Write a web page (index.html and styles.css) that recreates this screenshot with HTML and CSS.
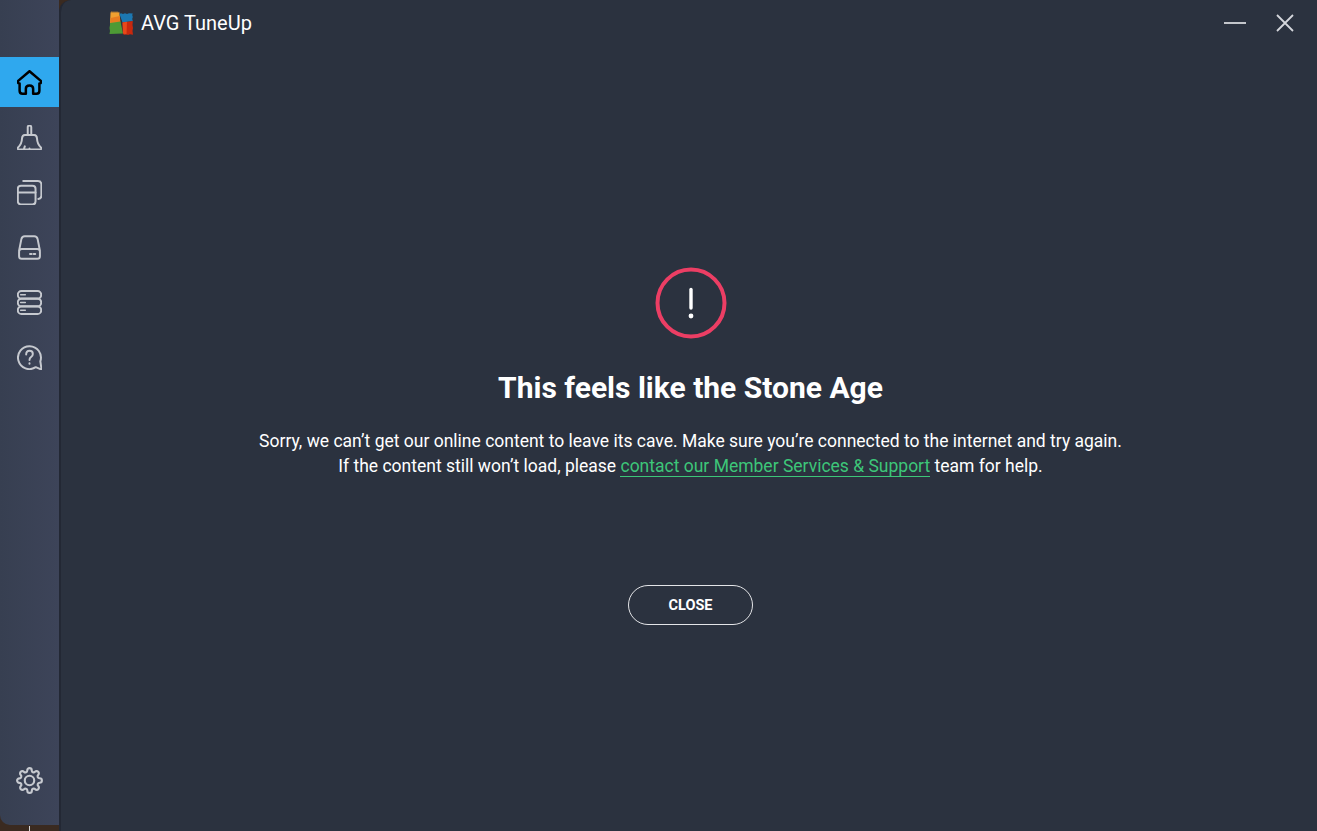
FILE: index.html
```html
<!DOCTYPE html>
<html lang="en">
<head>
  <meta charset="UTF-8" />
  <title>AVG TuneUp</title>
  <link rel="stylesheet" href="styles.css">
</head>
<body>
  <div class="app">
    <nav class="sidebar">
      <a class="nav-item active">
        <svg class="icon" viewBox="0 0 24 24"><path d="M12 1.2 L22.6 10.2 Q23.6 11.2 23 12.3 Q22.6 13 21.5 13 L21.5 20 Q21.5 22.8 18.7 22.8 L15.5 22.8 L15.5 18 Q15.5 14.8 12 14.8 Q8.5 14.8 8.5 18 L8.5 22.8 L5.3 22.8 Q2.5 22.8 2.5 20 L2.5 13 Q1.4 13 1 12.3 Q0.4 11.2 1.4 10.2 Z"/></svg>
      </a>
      <a class="nav-item">
        <svg class="icon" viewBox="0 0 24 24"><path d="M10.3 9.5 L10.3 2.2 Q10.3 0.5 12 0.5 Q13.7 0.5 13.7 2.2 L13.7 9.5 M4.8 13 Q5 9.5 7.5 9.5 L16.5 9.5 Q19 9.5 19.2 13 Q19.4 18.5 23.2 21.8 Q23.9 23.4 22 23.4 L2 23.4 Q0.1 23.4 0.8 21.8 Q4.6 18.5 4.8 13 Z M6.5 23.4 L7.5 20.5 M12 23.8 L12 22.5"/></svg>
      </a>
      <a class="nav-item">
        <svg class="icon" viewBox="0 0 24 24"><rect x="0.8" y="5.5" width="17" height="18" rx="3"/><path d="M0.8 12 L17.8 12 M6 1 L20 1 Q23.4 1 23.4 4.4 L23.4 15 Q23.4 17.8 20.5 18.2"/></svg>
      </a>
      <a class="nav-item">
        <svg class="icon" viewBox="0 0 24 24"><path d="M2 15 L4.2 4 Q4.8 1.2 7.4 1.2 L16.6 1.2 Q19.2 1.2 19.8 4 L22 15 M4.5 13.4 L19.5 13.4 Q22 13.4 22 15.9 L22 20.3 Q22 22.8 19.5 22.8 L4.5 22.8 Q2 22.8 2 20.3 L2 15.9 Q2 13.4 4.5 13.4 Z M12.5 18.2 L14 18.2 M16 18.2 L17.5 18.2"/></svg>
      </a>
      <a class="nav-item">
        <svg class="icon" viewBox="0 0 24 24"><rect x="0.8" y="1" width="22.4" height="7.2" rx="3.4"/><rect x="0.8" y="8.4" width="22.4" height="7.2" rx="3.4"/><rect x="0.8" y="15.8" width="22.4" height="7.2" rx="3.4"/><path class="thin" d="M3.5 4.6 L8 4.6 M3.5 12 L8 12 M3.5 19.4 L8 19.4"/></svg>
      </a>
      <a class="nav-item">
        <svg class="icon" viewBox="0 0 24 24"><path d="M23.6 23.6 L18 21.3 A11 11 0 1 1 22.4 15.6 Z M8.8 9.2 Q8.8 5.6 12 5.6 Q15.2 5.6 15.2 8.6 Q15.2 10.6 13.4 11.6 Q12 12.4 12 14.4"/><path d="M12 17.4 L12 18"/></svg>
      </a>
      <a class="nav-item settings">
        <svg class="icon gear" viewBox="0 0 24 24"><circle cx="12" cy="12" r="4.2"/><path d="M19.4 15a1.65 1.65 0 0 0 .33 1.82l.06.06a2 2 0 0 1 0 2.83 2 2 0 0 1-2.83 0l-.06-.06a1.65 1.65 0 0 0-1.82-.33 1.65 1.65 0 0 0-1 1.51V21a2 2 0 0 1-2 2 2 2 0 0 1-2-2v-.09A1.65 1.65 0 0 0 9 19.4a1.65 1.65 0 0 0-1.82.33l-.06.06a2 2 0 0 1-2.83 0 2 2 0 0 1 0-2.83l.06-.06a1.65 1.65 0 0 0 .33-1.82 1.65 1.65 0 0 0-1.51-1H3a2 2 0 0 1-2-2 2 2 0 0 1 2-2h.09A1.65 1.65 0 0 0 4.6 9a1.65 1.65 0 0 0-.33-1.82l-.06-.06a2 2 0 0 1 0-2.83 2 2 0 0 1 2.83 0l.06.06a1.65 1.65 0 0 0 1.82.33H9a1.65 1.65 0 0 0 1-1.51V3a2 2 0 0 1 2-2 2 2 0 0 1 2 2v.09a1.65 1.65 0 0 0 1 1.51 1.65 1.65 0 0 0 1.82-.33l.06-.06a2 2 0 0 1 2.83 0 2 2 0 0 1 0 2.83l-.06.06a1.65 1.65 0 0 0-.33 1.82V9a1.65 1.65 0 0 0 1.51 1H21a2 2 0 0 1 2 2 2 2 0 0 1-2 2h-.09a1.65 1.65 0 0 0-1.51 1z"/></svg>
      </a>
    </nav>
    <main class="main">
      <header class="titlebar">
        <div class="brand">
          <svg class="logo" viewBox="0 0 24 24">
            <path fill="#f0a030" d="M1.5 2 L2.2 0 L3 2 L4 0 L5 2 L6 0 L7 2 L8 0 L9 2 L10 0.5 L10.5 2 L11 12 L1 12 Z"/>
            <path fill="#e87c20" d="M1.5 7 L10.8 5 L11.5 11.5 L1.2 12 Z"/>
            <path fill="#1c78b2" d="M10.5 3 L12 2.2 L14 3 L16 2.2 L18 3 L20 2.2 L23.8 2.5 L23.2 4 L23.8 6 L23.2 8 L23.8 10 L13.5 11.5 Z"/>
            <path fill="#4d9a35" d="M1 12 L11.5 10.5 L14 22.5 L0.5 23 L1 20 L0.5 17 L1 14 Z"/>
            <path fill="#c8280e" d="M13.5 11.5 L23.8 10 L23.5 14 L24 17 L23.5 20 L24 23.8 L21 23.2 L19 24 L17 23.2 L15 24 L14 22.5 Z"/>
            <path fill="#e8481a" d="M13.5 11.5 L18 10.8 L17.5 23.6 L14 22.5 Z"/>
          </svg>
          <span>AVG TuneUp</span>
        </div>
        <div class="window-btns">
          <svg class="win-icon" viewBox="0 0 22 18"><path d="M0 9 L22 9"/></svg>
          <svg class="win-icon" viewBox="0 0 18 18"><path d="M1 1 L17 17 M17 1 L1 17"/></svg>
        </div>
      </header>
      <section class="message">
        <svg class="alert" viewBox="0 0 72 72">
          <circle class="alert-ring" cx="36" cy="36" r="33.5"/>
          <path class="alert-mark" d="M36 22.5 L36 41"/>
          <circle class="alert-dot" cx="36" cy="49" r="2.4"/>
        </svg>
        <h1>This feels like the Stone Age</h1>
        <p>Sorry, we can’t get our online content to leave its cave. Make sure you’re connected to the internet and try again.<br>If the content still won’t load, please <a class="link" href="#">contact our Member Services &amp; Support</a> team for help.</p>
        <button class="close-btn">CLOSE</button>
      </section>
    </main>
  </div>
</body>
</html>
```

FILE: styles.css
```css
html, body {
  margin: 0;
  height: 100%;
  overflow: hidden;
}
body {
  background-color: #3a2a20;
  font-family: Roboto, "Liberation Sans", sans-serif;
  color: #fff;
}
.app {
  display: flex;
  height: 831px;
}
.sidebar {
  position: relative;
  width: 59px;
  height: 825px;
  padding-top: 57px;
  box-sizing: border-box;
  background: linear-gradient(90deg, #373f51, #3d4459);
  border-bottom-left-radius: 10px;
  display: flex;
  flex-direction: column;
  gap: 5px;
}
/* bit of the desktop showing under the window */
.sidebar::after {
  content: "";
  position: absolute;
  left: 29px;
  top: 826px;
  width: 1px;
  height: 5px;
  background-color: #d8d8d8;
}
.nav-item {
  height: 50px;
  display: flex;
  align-items: center;
  justify-content: center;
}
.nav-item.active {
  background-color: #2fa8ee;
}
.nav-item.active .icon {
  stroke: #000;
  stroke-width: 2.4;
}
.nav-item.settings {
  margin-top: auto;
  margin-bottom: 20px;
}
.icon {
  width: 25px;
  height: 25px;
  fill: none;
  stroke: #c6c9cf;
  stroke-width: 1.9;
  stroke-linecap: round;
  stroke-linejoin: round;
}
.icon.gear {
  width: 27px;
  height: 27px;
}
.thin {
  stroke-width: 1.4;
}
.main {
  flex: 1;
  display: flex;
  flex-direction: column;
  background-color: #2b323f;
  border-left: 2px solid #232834;
  border-top-left-radius: 12px;
}
.titlebar {
  height: 45px;
  display: flex;
  justify-content: space-between;
  align-items: center;
  padding: 0 23px 0 48px;
}
.brand {
  display: flex;
  align-items: center;
  gap: 8px;
  font-size: 20px;
}
.logo {
  width: 24px;
  height: 24px;
}
.window-btns {
  display: flex;
  align-items: center;
  gap: 30px;
}
.win-icon {
  height: 18px;
  width: auto;
  fill: none;
  stroke: #d5d7dc;
  stroke-width: 1.8;
}
.message {
  display: flex;
  flex-direction: column;
  align-items: center;
  padding: 222px 0 0 3px;
}
.alert {
  width: 72px;
  height: 72px;
}
.alert-ring {
  fill: none;
  stroke: #ec3e64;
  stroke-width: 4;
}
.alert-mark {
  stroke: #fff;
  stroke-width: 3.4;
  stroke-linecap: round;
}
.alert-dot {
  fill: #fff;
}
h1 {
  margin: 31px 0 0;
  font-size: 30px;
  line-height: 36px;
  font-weight: 700;
}
p {
  margin: 23px 0 0;
  font-size: 17.5px;
  line-height: 25px;
  text-align: center;
}
.link {
  color: #3dc679;
  text-decoration: none;
  border-bottom: 1px solid #3dc679;
}
.close-btn {
  margin-top: 106px;
  width: 125px;
  height: 40px;
  border: 1px solid #e4e5e8;
  border-radius: 20px;
  background: transparent;
  color: #fff;
  font-family: Roboto, "Liberation Sans", sans-serif;
  font-size: 14.5px;
  font-weight: 700;
}
```
